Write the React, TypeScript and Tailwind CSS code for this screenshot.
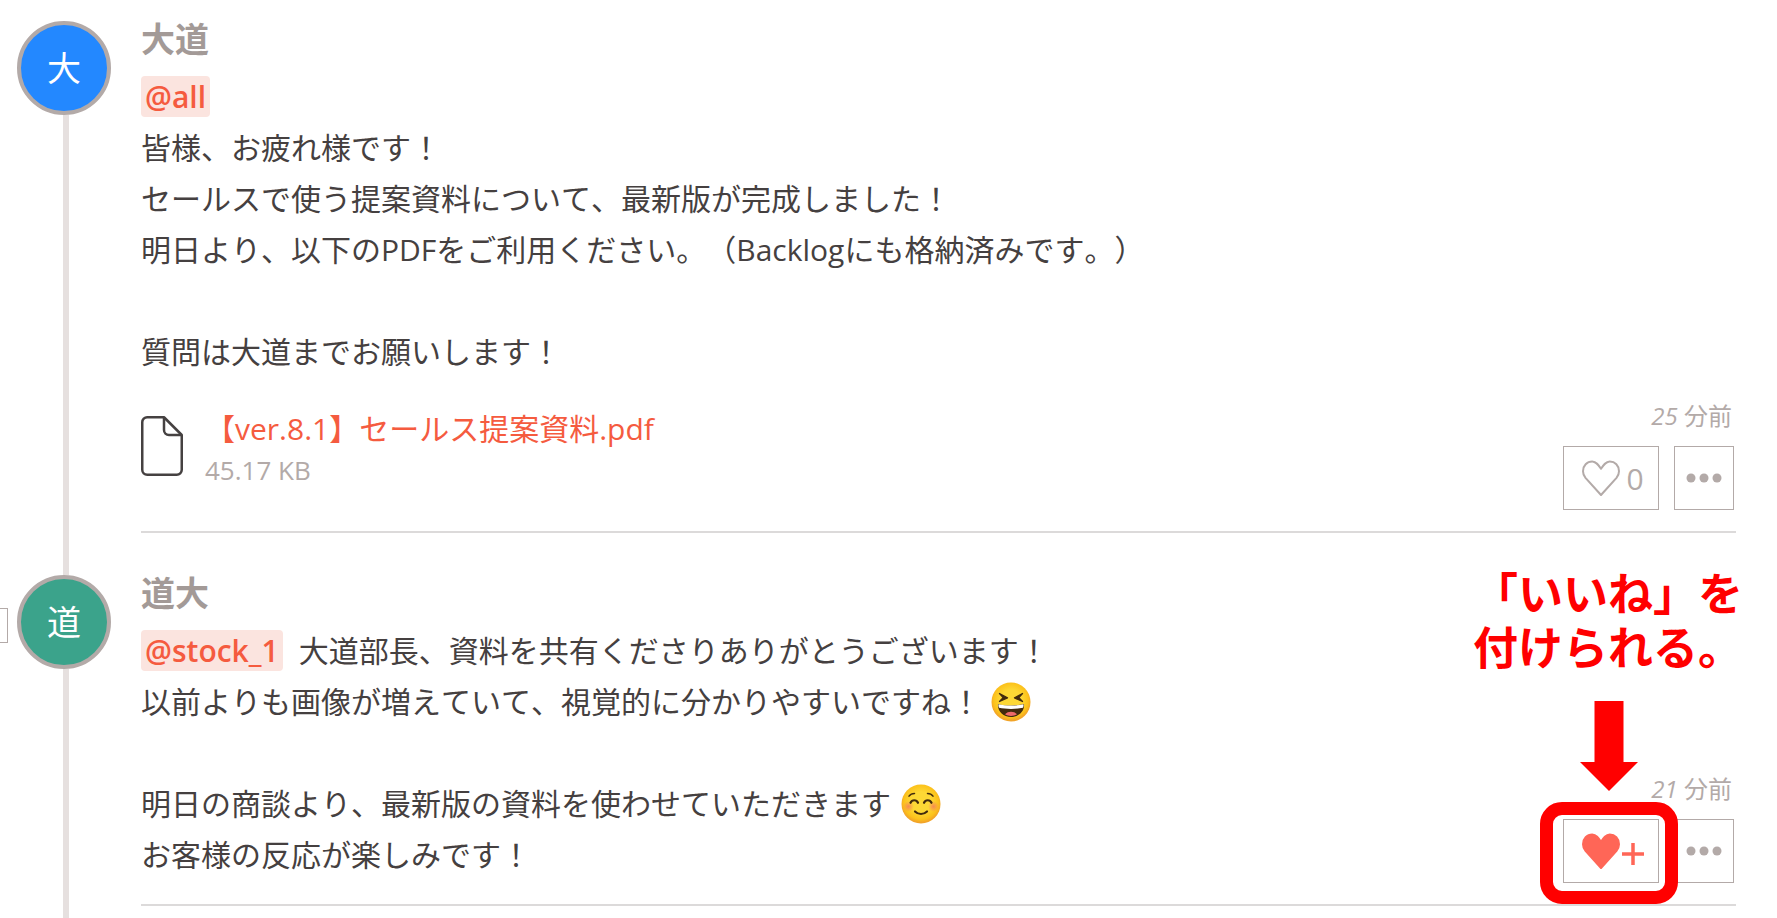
import type { ReactNode } from "react";

function LaughingEmoji() {
  return (
    <svg viewBox="0 0 40 40" role="img" aria-label="大笑い" className="mx-0.5 inline-block size-10 align-[-9px]">
      <defs>
        <radialGradient id="laugh-face" cx="50%" cy="45%" r="52%">
          <stop offset="0.5" stopColor="#fdd835" />
          <stop offset="0.85" stopColor="#fcc21b" />
          <stop offset="1" stopColor="#f2a428" />
        </radialGradient>
      </defs>
      <circle cx="20" cy="20" r="19.5" fill="url(#laugh-face)" />
      <path d="M8.500 11.500l8 4.300-8 3.700 3.600-3.900zM31.500 11.500l-8 4.300 8 3.700-3.600-3.900z" fill="#422b0d" stroke="#422b0d" strokeWidth="1.300" strokeLinejoin="round" />
      <path d="M7 22c7 2 19 2 26 0 .8 7-5 13-13 13S6.200 29 7 22z" fill="#422b0d" />
      <path d="M7.500 22.200c7 1.800 18 1.800 25 0 .2 1.500 0 2.600-.5 3.600-7 1.500-17 1.500-24 0-.5-1-.7-2.100-.5-3.600z" fill="#fff" />
      <path d="M14 32.300c3-3.300 9-3.300 12 0-3.600 2.200-8.400 2.200-12 0z" fill="#ee6a6a" />
    </svg>
  );
}

function SmilingEmoji() {
  return (
    <svg viewBox="0 0 40 40" role="img" aria-label="笑顔" className="mx-0.5 inline-block size-10 align-[-9px]">
      <defs>
        <radialGradient id="smile-face" cx="50%" cy="45%" r="52%">
          <stop offset="0.5" stopColor="#fdd835" />
          <stop offset="0.85" stopColor="#fcc21b" />
          <stop offset="1" stopColor="#f2a428" />
        </radialGradient>
        <radialGradient id="cheek">
          <stop offset="0" stopColor="#f57f5b" stopOpacity="0.85" />
          <stop offset="1" stopColor="#f57f5b" stopOpacity="0" />
        </radialGradient>
      </defs>
      <circle cx="20" cy="20" r="19.500" fill="url(#smile-face)" />
      <circle cx="7.500" cy="22.500" r="5.500" fill="url(#cheek)" />
      <circle cx="32.500" cy="22.500" r="5.500" fill="url(#cheek)" />
      <g fill="none" stroke="#422b0d" strokeLinecap="round">
        <path d="M8 12.200c1.300-1.900 3.200-2.800 5.500-2.800M32 12.200c-1.300-1.900-3.200-2.800-5.500-2.800" strokeWidth="1.500" />
        <path d="M9.500 18.800c1.500-3.400 6-3.400 7.500 0M23 18.800c1.500-3.400 6-3.400 7.500 0" strokeWidth="2.200" />
        <path d="M14 27.500c3.400 3.300 8.600 3.300 12 0" strokeWidth="2.200" />
      </g>
    </svg>
  );
}

function Heart({ filled = false }: { filled?: boolean }) {
  return (
    <svg viewBox="0 0 38 36" aria-hidden="true" className="h-9 w-[38px] shrink-0">
      <path
        d="M19 35L3.500 17.800C1.800 15.800 1 13.800 1 11.200 1 5.500 5 1.500 10.200 1.500c4 0 6.300 3.500 8.800 7.300 2.500-3.800 4.800-7.300 8.800-7.300C33 1.500 37 5.500 37 11.200c0 2.600-.8 4.600-2.500 6.600z"
        fill={filled ? "#ff6657" : "none"}
        stroke={filled ? "#ff6657" : "#b3aaa8"}
        strokeWidth="2"
        strokeLinejoin="round"
      />
    </svg>
  );
}

function FileIcon() {
  return (
    <svg viewBox="0 0 42 60" fill="none" stroke="#454141" strokeWidth="2.500" strokeLinejoin="round" aria-hidden="true" className="h-[60px] w-[42px] shrink-0">
      <path d="M6 1.250h17L40.750 19v34.750a5 5 0 0 1-5 5H6.250a5 5 0 0 1-5-5V6.250a5 5 0 0 1 5-5z" />
      <path d="M23 1.250V14a5 5 0 0 0 5 5h12.750" />
    </svg>
  );
}

function Mention({ children }: { children: ReactNode }) {
  return (
    <a href="#mention" className="rounded-sm bg-[#fbe4df] px-1 font-semibold text-[#f55b3f]">
      {children}
    </a>
  );
}

function LikeHint() {
  return (
    <>
      <div className="pointer-events-none absolute -top-[17px] -right-[19px] -bottom-[21px] -left-[23px] z-10 rounded-[22px] border-[13px] border-[#ff0000]" />
      <div className="pointer-events-none absolute -right-[84px] bottom-[92px] z-10 flex w-[270px] flex-col">
        <p className="text-[45px] leading-[54px] font-bold whitespace-nowrap text-[#ff0000]">
          「いいね」を
          <br />
          付けられる。
        </p>
        <svg viewBox="0 0 60 90" fill="#ff0000" aria-hidden="true" className="mt-[26px] ml-[106px] h-[90px] w-[60px]">
          <path d="M15.500 0h29v61H59L30 90 1 61h14.500z" />
        </svg>
      </div>
    </>
  );
}

interface CommentProps {
  name: string;
  initial: string;
  avatarClass: string;
  minutes: number;
  liked?: boolean;
  last?: boolean;
  children: ReactNode;
}

function Comment({ name, initial, avatarClass, minutes, liked = false, last = false, children }: CommentProps) {
  return (
    <article className={last ? "flex flex-1 gap-[30px]" : "flex gap-[30px]"}>
      <div className="flex w-[94px] shrink-0 flex-col items-center">
        <div className={`flex size-[94px] shrink-0 items-center justify-center rounded-full border-4 border-[#b3aaa8] text-[34px] text-white ${avatarClass}`}>
          {initial}
        </div>
        <div className="ml-1 w-[6px] flex-1 bg-[#e6e0df]" />
      </div>
      <div className="min-w-0 flex-1">
        <div className={last ? "border-b-2 border-[#dcdada]" : "mb-[42px] border-b-2 border-[#dcdada]"}>
          <h2 className="text-[34px] leading-9 font-bold text-[#a39a97]">{name}</h2>
          <div className="flex items-end justify-between pt-[14px] pb-[21px]">
            <div className="pb-[3px] text-[30px] leading-[51px] text-[#454040]">{children}</div>
            <div className="mr-0.5 flex shrink-0 flex-col items-end">
              <time className="mr-0.5 text-[24px] leading-9 text-[#b3aaa8]">
                <em>{minutes}</em> 分前
              </time>
              <div className="mt-3 flex gap-[15px]">
                <div className="relative">
                  <button type="button" aria-label={liked ? "いいねを付ける" : "いいね 0件"} className="flex h-16 w-24 items-center justify-center gap-1.5 border border-[#b3aaa8] pl-1 text-[30px] text-[#b3aaa8]">
                    <Heart filled={liked} />
                    {liked ? (
                      <svg viewBox="0 0 22 22" aria-hidden="true" className="-ml-1 mt-1.5 size-[22px]">
                        <path d="M11 0v22M0 11h22" stroke="#ff6657" strokeWidth="3.500" />
                      </svg>
                    ) : (
                      <span>0</span>
                    )}
                  </button>
                  {liked && <LikeHint />}
                </div>
                <button type="button" aria-label="その他" className="flex h-16 w-[60px] items-center justify-center border border-[#b3aaa8]">
                  <svg viewBox="0 0 36 10" fill="#b3aaa8" aria-hidden="true" className="h-2.5 w-9">
                    <circle cx="5" cy="5" r="4.500" />
                    <circle cx="18" cy="5" r="4.500" />
                    <circle cx="31" cy="5" r="4.500" />
                  </svg>
                </button>
              </div>
            </div>
          </div>
        </div>
      </div>
    </article>
  );
}

export default function App() {
  return (
    <main lang="ja" className="relative flex min-h-screen flex-col overflow-hidden bg-white pt-[21px] pr-[41px] pl-[17px] font-['Open_Sans','Noto_Sans_CJK_JP',sans-serif] [font-kerning:none] [text-spacing-trim:space-all]">
      <div className="absolute top-[608px] left-0 h-[35px] w-2 border border-l-0 border-[#b3aaa8]" />

      <Comment name="大道" initial="大" avatarClass="bg-[#2388ff]" minutes={25}>
        <p>
          <Mention>@all</Mention>
          <br />
          皆様、お疲れ様です！
          <br />
          セールスで使う提案資料について、最新版が完成しました！
          <br />
          明日より、以下のPDFをご利用ください。（Backlogにも格納済みです。）
        </p>
        <p className="mt-[51px]">質問は大道までお願いします！</p>
        <div className="mt-[39px] flex items-start gap-[22px] pb-[17px]">
          <FileIcon />
          <div className="-mt-2 flex flex-col">
            <a href="#file" className="leading-[42px] text-[#f55b3f]">
              【ver.8.1】セールス提案資料.pdf
            </a>
            <span className="text-[26px] leading-10 text-[#b3aaa8]">45.17 KB</span>
          </div>
        </div>
      </Comment>

      <Comment name="道大" initial="道" avatarClass="bg-[#3ba38b]" minutes={21} liked last>
        <p>
          <Mention>@stock_1</Mention>
          <span className="ml-4">大道部長、資料を共有くださりありがとうございます！</span>
          <br />
          以前よりも画像が増えていて、視覚的に分かりやすいですね！ <LaughingEmoji />
        </p>
        <p className="mt-[51px]">
          明日の商談より、最新版の資料を使わせていただきます <SmilingEmoji />
          <br />
          お客様の反応が楽しみです！
        </p>
      </Comment>
    </main>
  );
}
